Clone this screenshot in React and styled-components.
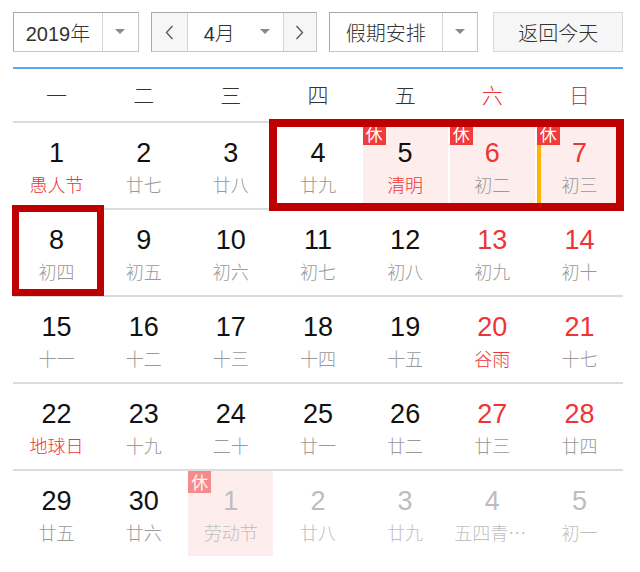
import React from "react";
import styled, { createGlobalStyle } from "styled-components";

const GlobalStyle = createGlobalStyle`
  html, body {
    margin: 0;
    background: #fff;
    font-family: "Liberation Sans", Arial, "Noto Sans CJK SC", sans-serif;
  }
`;

const weekdays = ["一", "二", "三", "四", "五", "六", "日"];

// fest: lunar line is a festival (red), rest: day off, other: next month
const weeks = [
  [
    { d: 1, l: "愚人节", fest: true },
    { d: 2, l: "廿七" },
    { d: 3, l: "廿八" },
    { d: 4, l: "廿九" },
    { d: 5, l: "清明", fest: true, rest: true },
    { d: 6, l: "初二", rest: true },
    { d: 7, l: "初三", rest: true, today: true },
  ],
  [
    { d: 8, l: "初四" },
    { d: 9, l: "初五" },
    { d: 10, l: "初六" },
    { d: 11, l: "初七" },
    { d: 12, l: "初八" },
    { d: 13, l: "初九" },
    { d: 14, l: "初十" },
  ],
  [
    { d: 15, l: "十一" },
    { d: 16, l: "十二" },
    { d: 17, l: "十三" },
    { d: 18, l: "十四" },
    { d: 19, l: "十五" },
    { d: 20, l: "谷雨", fest: true },
    { d: 21, l: "十七" },
  ],
  [
    { d: 22, l: "地球日", fest: true },
    { d: 23, l: "十九" },
    { d: 24, l: "二十" },
    { d: 25, l: "廿一" },
    { d: 26, l: "廿二" },
    { d: 27, l: "廿三" },
    { d: 28, l: "廿四" },
  ],
  [
    { d: 29, l: "廿五" },
    { d: 30, l: "廿六" },
    { d: 1, l: "劳动节", other: true, rest: true },
    { d: 2, l: "廿八", other: true },
    { d: 3, l: "廿九", other: true },
    { d: 4, l: "五四青年节", other: true },
    { d: 5, l: "初一", other: true },
  ],
];

function Caret() {
  return (
    <svg width="10" height="6" viewBox="0 0 10 6">
      <path d="M0 0 L10 0 L5 5 Z" fill="#8a8a8a" />
    </svg>
  );
}

function Chevron({ dir }) {
  return (
    <svg width="9" height="15" viewBox="0 0 9 15">
      <path
        d={dir === "left" ? "M7.5 1 L1.5 7.5 L7.5 14" : "M1.5 1 L7.5 7.5 L1.5 14"}
        fill="none"
        stroke="#555"
        strokeWidth="1.3"
      />
    </svg>
  );
}

export default function App() {
  return (
    <>
      <GlobalStyle />
      <Page>
        <Toolbar>
          <Select $w={126}>
            <SelectText $w={88} $center>2019年</SelectText>
            <CaretBox>
              <Caret />
            </CaretBox>
          </Select>
          <Select $w={166}>
            <NavBtn>
              <Chevron dir="left" />
            </NavBtn>
            <SelectText $w={95} $pad={16}>
              4月
              <CaretInline>
                <Caret />
              </CaretInline>
            </SelectText>
            <NavBtn $right>
              <Chevron dir="right" />
            </NavBtn>
          </Select>
          <Select $w={150}>
            <SelectText $w={112} $center>假期安排</SelectText>
            <CaretBox>
              <Caret />
            </CaretBox>
          </Select>
          <TodayButton>返回今天</TodayButton>
        </Toolbar>
        <BlueLine />
        <WeekHead>
          {weekdays.map((w, i) => (
            <WeekName key={w} $red={i >= 5}>
              {w}
            </WeekName>
          ))}
        </WeekHead>
        <Weeks>
          {weeks.map((row, ri) => (
            <Week key={ri}>
              {row.map((c, ci) => (
                <Cell key={ci} $rest={c.rest} $today={c.today}>
                  {c.rest && <RestBadge $faded={c.other}>休</RestBadge>}
                  <DayNum $red={ci >= 5 && !c.other} $other={c.other}>
                    {c.d}
                  </DayNum>
                  <Lunar $red={c.fest && !c.other} $other={c.other}>
                    {c.l}
                  </Lunar>
                </Cell>
              ))}
            </Week>
          ))}
          <Mark $l={256} $t={-2} $w={355} $h={92} $b={8} />
          <Mark $l={-1} $t={84} $w={92} $h={91} $b={7} />
        </Weeks>
      </Page>
    </>
  );
}

const Page = styled.div`
  width: 610px;
  padding: 12px 0 0 13px;
`;

const Toolbar = styled.div`
  display: flex;
  align-items: center;
  height: 40px;
  gap: 11px;
`;

const Select = styled.div`
  display: flex;
  width: ${(p) => p.$w}px;
  height: 40px;
  box-sizing: border-box;
  border: 1px solid #c6c6c6;
  border-top-color: #a9a9a9;
  border-left-color: #a9a9a9;
  background: #fff;
  & + & {
    margin-left: 1px;
  }
`;

const SelectText = styled.div`
  width: ${(p) => p.$w}px;
  display: flex;
  align-items: center;
  justify-content: ${(p) => (p.$center ? "center" : "flex-start")};
  padding-left: ${(p) => p.$pad || 0}px;
  box-sizing: border-box;
  font-family: "Liberation Sans", "Noto Sans CJK SC", sans-serif;
  font-weight: 300;
  font-size: 20px;
  color: #333;
`;

const CaretBox = styled.div`
  flex: 1;
  display: flex;
  align-items: center;
  justify-content: center;
  border-left: 1px solid #d4d4d4;
`;

const CaretInline = styled.span`
  display: flex;
  margin-left: auto;
  margin-right: 13px;
`;

const NavBtn = styled.div`
  width: 35px;
  display: flex;
  align-items: center;
  justify-content: center;
  background: #f6f6f6;
  border-${(p) => (p.$right ? "left" : "right")}: 1px solid #d4d4d4;
  flex: ${(p) => (p.$right ? 1 : "none")};
`;

const TodayButton = styled.div`
  width: 130px;
  height: 40px;
  margin-left: 4px;
  box-sizing: border-box;
  border: 1px solid #d8d8d8;
  background: #f6f6f6;
  display: flex;
  align-items: center;
  justify-content: center;
  font-family: "Noto Sans CJK SC", sans-serif;
  font-weight: 300;
  font-size: 20px;
  color: #333;
`;

const BlueLine = styled.div`
  height: 2px;
  margin-top: 15px;
  background: #5aa8ef;
`;

const WeekHead = styled.div`
  display: grid;
  grid-template-columns: repeat(7, 1fr);
  height: 52px;
  align-items: center;
`;

const WeekName = styled.div`
  text-align: center;
  line-height: 26px;
  margin-top: -2px;
  font-family: "Noto Sans CJK SC", sans-serif;
  font-weight: 300;
  font-size: 21px;
  color: ${(p) => (p.$red ? "#ee3535" : "#333")};
`;

const Weeks = styled.div`
  position: relative;
`;

const Week = styled.div`
  display: grid;
  grid-template-columns: repeat(7, 1fr);
  border-top: 2px solid #dcdcdc;
`;

const Cell = styled.div`
  position: relative;
  height: 85px;
  margin: 0 1px;
  display: flex;
  flex-direction: column;
  align-items: center;
  padding-top: 15px;
  box-sizing: border-box;
  background: ${(p) => (p.$rest ? "#fdeded" : "transparent")};
  box-shadow: ${(p) => (p.$today ? "inset 4px 0 0 #ffb400" : "none")};
`;

const RestBadge = styled.div`
  position: absolute;
  left: 0;
  top: 0;
  width: 23px;
  height: 22px;
  line-height: 21px;
  text-align: center;
  background: #f03c3c;
  color: #fff;
  font-family: "Noto Sans CJK SC", sans-serif;
  font-size: 17px;
  opacity: ${(p) => (p.$faded ? 0.55 : 1)};
`;

const DayNum = styled.div`
  font-size: 27px;
  line-height: 30px;
  color: ${(p) => (p.$other ? "#bdbdbd" : p.$red ? "#ee3535" : "#111")};
`;

const Lunar = styled.div`
  margin-top: 4px;
  max-width: 76px;
  overflow: hidden;
  white-space: nowrap;
  text-overflow: ellipsis;
  font-family: "Noto Sans CJK SC", sans-serif;
  font-weight: 300;
  font-size: 18px;
  line-height: 24px;
  color: ${(p) => (p.$other ? "#c0c0c0" : p.$red ? "#ee3535" : "#999")};
`;

const Mark = styled.div`
  position: absolute;
  left: ${(p) => p.$l}px;
  top: ${(p) => p.$t}px;
  width: ${(p) => p.$w}px;
  height: ${(p) => p.$h}px;
  box-sizing: border-box;
  border: ${(p) => p.$b}px solid #bf0000;
  pointer-events: none;
`;
